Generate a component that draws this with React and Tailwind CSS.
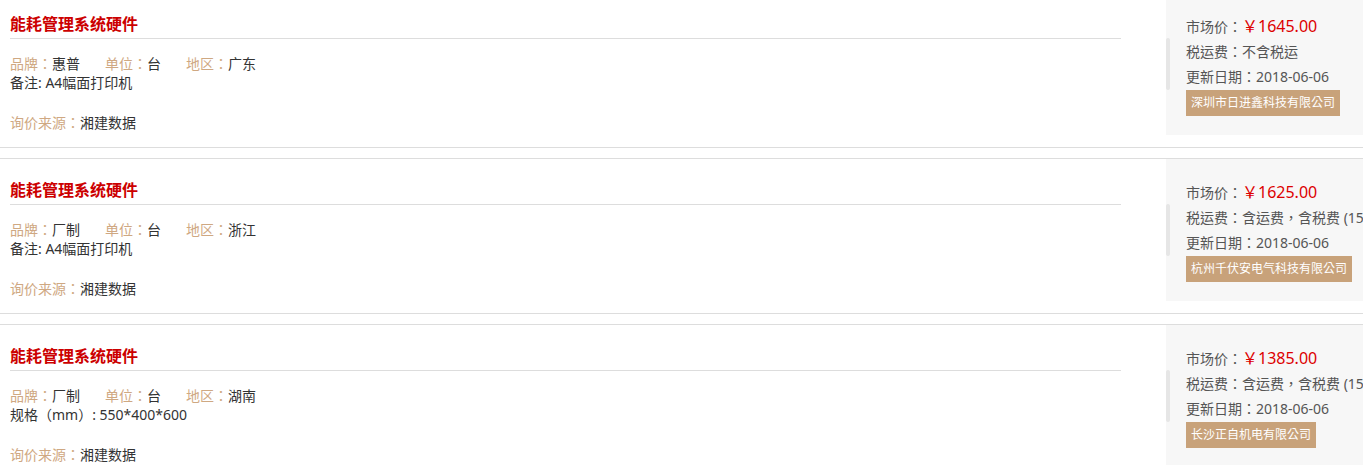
const items = [
  {
    title: '能耗管理系统硬件',
    brand: '惠普',
    unit: '台',
    region: '广东',
    note: '备注: A4幅面打印机',
    source: '湘建数据',
    price: '￥1645.00',
    tax: '不含税运',
    date: '2018-06-06',
    company: '深圳市日进鑫科技有限公司',
  },
  {
    title: '能耗管理系统硬件',
    brand: '厂制',
    unit: '台',
    region: '浙江',
    note: '备注: A4幅面打印机',
    source: '湘建数据',
    price: '￥1625.00',
    tax: '含运费，含税费 (15%)',
    date: '2018-06-06',
    company: '杭州千伏安电气科技有限公司',
  },
  {
    title: '能耗管理系统硬件',
    brand: '厂制',
    unit: '台',
    region: '湖南',
    note: '规格（mm）: 550*400*600',
    source: '湘建数据',
    price: '￥1385.00',
    tax: '含运费，含税费 (15%)',
    date: '2018-06-06',
    company: '长沙正自机电有限公司',
  },
];

function Field({ label, value }) {
  return (
    <span>
      <span className="text-[#cfa882]">{label}：</span>
      <span className="text-[#333]">{value}</span>
    </span>
  );
}

function PriceItem({ item }) {
  return (
    <div className="flex h-[156px] mb-[10px] border-y border-[#ddd] bg-white">
      <div className="w-[1121px] shrink-0 pl-[10px]">
        <h3 className="pt-[19px] pb-[2px] leading-[24px] text-[16px] font-bold text-[#cc0000] border-b border-[#ddd]">
          {item.title}
        </h3>
        <div className="mt-[15px] flex gap-[25px] text-[14px] leading-[19px]">
          <Field label="品牌" value={item.brand} />
          <Field label="单位" value={item.unit} />
          <Field label="地区" value={item.region} />
        </div>
        <p className="text-[14px] leading-[19px] text-[#333]">{item.note}</p>
        <div className="mt-[21px] text-[14px] leading-[19px]">
          <Field label="询价来源" value={item.source} />
        </div>
      </div>
      <div className="ml-[45px] w-[240px] shrink-0 self-start h-[142px] bg-[#f7f7f7] relative pl-[20px] pt-[21px] text-[14px] leading-[25px] text-[#555] whitespace-nowrap">
        <div className="absolute left-0 top-[45px] h-[52px] w-[4px] rounded-sm bg-[#e6e6e6]" />
        <p>
          市场价：<span className="text-[16px] text-[#dd0000]">{item.price}</span>
        </p>
        <p>税运费：{item.tax}</p>
        <p>更新日期：{item.date}</p>
        <span className="inline-block px-[5px] leading-[26px] text-[12px] text-white bg-[#c8a27a]">
          {item.company}
        </span>
      </div>
    </div>
  );
}

export default function App() {
  return (
    <div
      className="w-full h-[465px] overflow-hidden bg-white"
      style={{ fontFamily: '"Noto Sans", "Noto Sans CJK TC", sans-serif' }}
    >
      <div className="-mt-[8px]">
        {items.map((item, i) => (
          <PriceItem key={i} item={item} />
        ))}
      </div>
    </div>
  );
}
